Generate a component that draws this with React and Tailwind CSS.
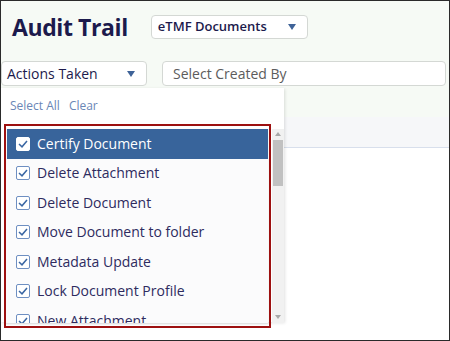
import React from "react";

const actions = [
  "Certify Document",
  "Delete Attachment",
  "Delete Document",
  "Move Document to folder",
  "Metadata Update",
  "Lock Document Profile",
  "New Attachment",
];

// ─── Small pieces ──────────────────────────────────────────────────
function Caret() {
  return (
    <svg width="8" height="6" viewBox="0 0 8 6" className="shrink-0">
      <path d="M0 0 L8 0 L4 6 Z" fill="#3f6398" />
    </svg>
  );
}

function Check({ active }) {
  return (
    <span
      className={`w-[14px] h-[14px] rounded-[2px] border flex items-center justify-center shrink-0 bg-white ${
        active ? "border-white" : "border-[#6e8fc2]"
      }`}
    >
      <svg width="10" height="8" viewBox="0 0 10 8">
        <path d="M1 4 L4 6.8 L9 1" fill="none" stroke="#3a66a3" strokeWidth="1.5" />
      </svg>
    </span>
  );
}

function Row({ label, active }) {
  return (
    <div
      className={`h-[29.5px] flex items-center gap-[7px] pl-[9px] shrink-0 ${
        active ? "bg-[#38649b] text-white" : "text-[#2e2b5f]"
      }`}
    >
      <Check active={active} />
      <span className="text-[14px] whitespace-nowrap leading-none">{label}</span>
    </div>
  );
}

// ─── Page ──────────────────────────────────────────────────────────
export default function App() {
  return (
    <div className="w-[450px] h-[341px] border border-[#2a2a2a] bg-white relative overflow-hidden font-['Open_Sans',sans-serif] flex flex-col">
      <div className="h-[116px] bg-[#f6faf5] flex flex-col shrink-0">
        <div className="flex items-center pt-[14px] pl-[11px]">
          <h1 className="text-[23px] font-bold text-[#1c1a4c] leading-none tracking-[-0.4px]">Audit Trail</h1>
          <div className="ml-[23px] w-[157px] h-[24px] bg-white border border-[#d4d8d4] rounded-[4px] flex items-center justify-between pl-[6px] pr-[11px]">
            <span className="text-[13px] font-semibold text-[#1c1a4c]">eTMF Documents</span>
            <Caret />
          </div>
        </div>
        <div className="flex items-center gap-[15px] mt-[22px]">
          <div className="w-[146px] h-[25px] bg-white border border-[#d4d8d4] rounded-[4px] flex items-center justify-between pl-[5px] pr-[11px]">
            <span className="text-[14px] font-medium text-[#1c1a4c]">Actions Taken</span>
            <Caret />
          </div>
          <div className="w-[284px] h-[25px] bg-white border border-[#d4d8d4] rounded-[4px] flex items-center pl-[10px]">
            <span className="text-[14px] text-[#5c5c5c]">Select Created By</span>
          </div>
        </div>
      </div>
      <div className="h-[31px] bg-[#f6f7f9] border-b border-[#d8dfec] shrink-0" />
      <div className="flex-1 bg-white" />

      {/* dropdown menu */}
      <div className="absolute left-0 top-[87px] w-[283px] h-[234px] bg-white shadow-[1px_1px_3px_rgba(0,0,0,0.12)] flex flex-col">
        <div className="flex gap-[9px] pl-[9px] pt-[9px] text-[12px] text-[#6a86b6]">
          <span>Select All</span>
          <span>Clear</span>
        </div>
        <div className="flex mt-[14px] h-[194px] ml-[5px]">
          <div className="w-[262px] bg-[#fbfbfc] flex flex-col overflow-hidden pl-[1px] shadow-[0_1px_2px_rgba(0,0,0,0.1)]">
            {actions.map((a, i) => (
              <Row key={a} label={a} active={i === 0} />
            ))}
          </div>
          <div className="ml-[4px] w-[12px] bg-[#f1f1f1] flex flex-col items-center pt-[3px] pb-[4px]">
            <svg width="6" height="4" viewBox="0 0 6 4">
              <path d="M0 4 L6 4 L3 0 Z" fill="#a8a8a8" />
            </svg>
            <div className="w-[10px] h-[46px] bg-[#c1c1c1] mt-[4px]" />
            <div className="flex-1" />
            <svg width="6" height="4" viewBox="0 0 6 4">
              <path d="M0 0 L6 0 L3 4 Z" fill="#a8a8a8" />
            </svg>
          </div>
        </div>
      </div>

      {/* highlight annotation */}
      <div className="absolute left-[3px] top-[123px] w-[267px] h-[204px] border-2 border-[#9d1010] pointer-events-none" />
    </div>
  );
}
